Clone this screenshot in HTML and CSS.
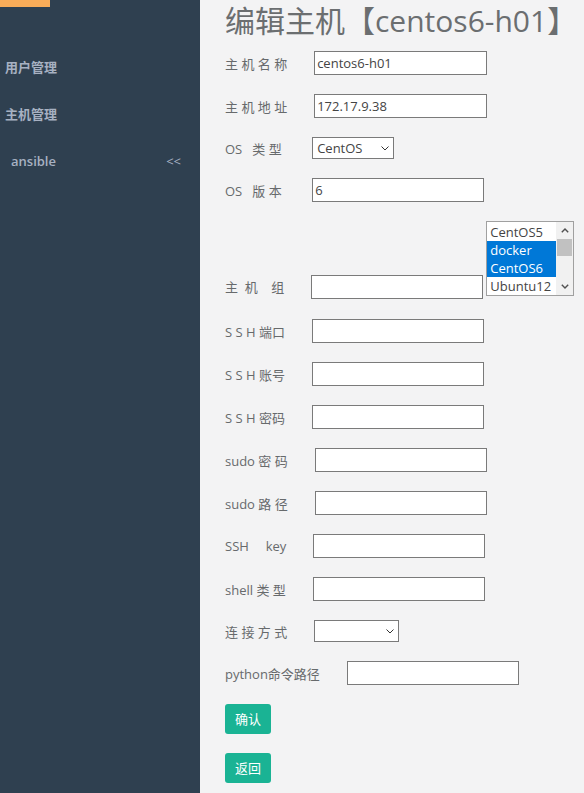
FILE: index.html
```html
<!DOCTYPE html>
<html lang="zh-CN">
<head>
<meta charset="utf-8">
<title>编辑主机</title>
<link rel="stylesheet" href="styles.css">
</head>
<body>
<aside class="sidebar">
  <div class="brand-bar"></div>
  <ul class="nav">
    <li class="nav-item">用户管理</li>
    <li class="nav-item">主机管理</li>
    <li class="nav-item nav-item-sub"><span>ansible</span><span class="nav-toggle">&lt;&lt;</span></li>
  </ul>
</aside>
<main class="content">
  <h1 class="page-title">编辑主机【centos6-h01】</h1>
  <form class="host-form">
    <div class="field"><label class="field-label">主 机 名 称</label><input class="text-input text-input-wide" type="text" value="centos6-h01"></div>
    <div class="field"><label class="field-label">主 机 地 址</label><input class="text-input text-input-wide" type="text" value="172.17.9.38"></div>
    <div class="field"><label class="field-label">OS   类 型 </label>
      <div class="select-box select-os">
        <select class="select"><option>CentOS</option></select>
        <svg class="select-arrow" width="8" height="5" viewBox="0 0 8 5"><path d="M0.5 0.5 L4 4 L7.5 0.5" fill="none" stroke="#333" stroke-width="1"/></svg>
      </div>
    </div>
    <div class="field"><label class="field-label">OS   版 本 </label><input class="text-input" type="text" value="6"></div>
    <div class="field field-group"><label class="field-label field-label-group">主  机    组</label><input class="text-input" type="text">
      <div class="listbox">
        <div class="listbox-options">
          <div class="listbox-option">CentOS5</div>
          <div class="listbox-option is-selected">docker</div>
          <div class="listbox-option is-selected">CentOS6</div>
          <div class="listbox-option">Ubuntu12</div>
        </div>
        <div class="listbox-scrollbar">
          <div class="scroll-btn"><svg width="8" height="5" viewBox="0 0 8 5"><path d="M0.8 4.2 L4 1 L7.2 4.2" fill="none" stroke="#505050" stroke-width="1.4"/></svg></div>
          <div class="scroll-track"><div class="scroll-thumb"></div></div>
          <div class="scroll-btn"><svg width="8" height="5" viewBox="0 0 8 5"><path d="M0.8 0.8 L4 4 L7.2 0.8" fill="none" stroke="#505050" stroke-width="1.4"/></svg></div>
        </div>
      </div>
    </div>
    <div class="field"><label class="field-label">S S H 端口</label><input class="text-input" type="text"></div>
    <div class="field"><label class="field-label">S S H 账号</label><input class="text-input" type="text"></div>
    <div class="field"><label class="field-label">S S H 密码</label><input class="text-input" type="password"></div>
    <div class="field"><label class="field-label">sudo 密 码</label><input class="text-input" type="password"></div>
    <div class="field"><label class="field-label">sudo 路 径</label><input class="text-input" type="text"></div>
    <div class="field"><label class="field-label">SSH     key</label><input class="text-input" type="text"></div>
    <div class="field"><label class="field-label">shell 类 型</label><input class="text-input" type="text"></div>
    <div class="field"><label class="field-label">连 接 方 式</label>
      <div class="select-box select-conn">
        <select class="select"><option></option></select>
        <svg class="select-arrow" width="8" height="5" viewBox="0 0 8 5"><path d="M0.5 0.5 L4 4 L7.5 0.5" fill="none" stroke="#333" stroke-width="1"/></svg>
      </div>
    </div>
    <div class="field"><label class="field-label">python命令路径</label><input class="text-input" type="text"></div>
    <button class="btn-primary" type="submit">确认</button>
    <button class="btn-primary" type="button">返回</button>
  </form>
</main>
</body>
</html>
```

FILE: styles.css
```css
html, body {
  margin: 0;
  padding: 0;
}
body {
  display: flex;
  min-height: 100vh;
  background: #f3f3f4;
  font-family: "Open Sans", "Noto Sans CJK SC", sans-serif;
  font-size: 13px;
  color: #676a6c;
}
.sidebar {
  width: 200px;
  flex-shrink: 0;
  background: #2f4050;
}
.brand-bar {
  width: 50px;
  height: 7px;
  background: #f8ac59;
}
.nav {
  list-style: none;
  margin: 36px 0 0;
  padding: 0;
}
.nav-item {
  height: 47px;
  display: flex;
  align-items: center;
  padding-left: 5px;
  font-weight: 600;
  color: #a7b1c2;
}
.nav-item-sub {
  padding-left: 11px;
  padding-right: 19px;
}
.nav-toggle {
  margin-left: auto;
  font-weight: 400;
}
.content {
  flex: 1;
  padding-left: 25px;
}
.page-title {
  margin: 0;
  padding-top: 1px;
  font-size: 30px;
  line-height: 40px;
  font-weight: 400;
  color: #6b6e70;
  white-space: nowrap;
}
.host-form {
  margin-top: 10px;
}
.field {
  display: flex;
  align-items: center;
  margin-bottom: 19px;
}
.field-label {
  white-space: pre;
  margin-right: 27px;
  color: #676a6c;
}
.text-input {
  box-sizing: border-box;
  width: 172px;
  height: 24px;
  margin: 0;
  padding: 1px 2px;
  border: 1px solid #7a7a7a;
  border-radius: 0;
  background: #fff;
  font-family: "Open Sans", "Noto Sans CJK SC", sans-serif;
  font-size: 13px;
  color: #444;
  outline: none;
}
.text-input-wide {
  width: 173px;
}
.select-box {
  position: relative;
  height: 22px;
}
.select-os {
  width: 82px;
}
.select-conn {
  width: 85px;
}
.select {
  appearance: none;
  -webkit-appearance: none;
  box-sizing: border-box;
  width: 100%;
  height: 22px;
  margin: 0;
  padding: 0 16px 0 4px;
  border: 1px solid #7a7a7a;
  border-radius: 0;
  background: #fff;
  font-family: "Open Sans", "Noto Sans CJK SC", sans-serif;
  font-size: 13px;
  color: #444;
  outline: none;
}
.select-arrow {
  position: absolute;
  right: 5px;
  top: 9px;
  pointer-events: none;
}
.field-group {
  align-items: flex-end;
  margin-bottom: 20px;
}
.field-label-group {
  line-height: 24px;
}
.listbox {
  box-sizing: border-box;
  display: flex;
  width: 88px;
  height: 75px;
  margin-left: 3px;
  margin-bottom: 3px;
  border: 1px solid #a0a0a0;
  background: #fff;
  overflow: hidden;
}
.listbox-options {
  flex: 1;
  padding-top: 1px;
}
.listbox-option {
  height: 18px;
  line-height: 18px;
  padding-left: 3px;
  color: #444;
  white-space: nowrap;
}
.listbox-option.is-selected {
  background: #0078d7;
  color: #fff;
}
.listbox-scrollbar {
  width: 17px;
  display: flex;
  flex-direction: column;
  background: #f1f1f1;
}
.scroll-btn {
  height: 17px;
  display: flex;
  align-items: center;
  justify-content: center;
}
.scroll-track {
  flex: 1;
  padding: 0 1px;
}
.scroll-thumb {
  height: 17px;
  background: #c1c1c1;
}
.btn-primary {
  display: block;
  margin: 0 0 19px;
  padding: 6px 10px;
  border: none;
  border-radius: 3px;
  background: #1ab394;
  color: #fff;
  font-family: "Open Sans", "Noto Sans CJK SC", sans-serif;
  font-size: 13px;
  line-height: 18px;
  cursor: pointer;
}
```
